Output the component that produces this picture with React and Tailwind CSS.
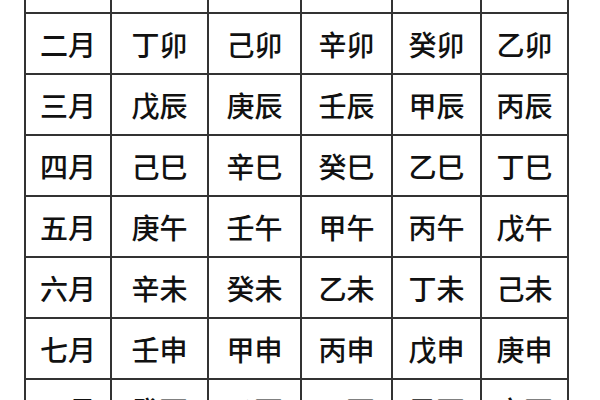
const rows = [
  ["正月", "丙寅", "戊寅", "庚寅", "壬寅", "甲寅"],
  ["二月", "丁卯", "己卯", "辛卯", "癸卯", "乙卯"],
  ["三月", "戊辰", "庚辰", "壬辰", "甲辰", "丙辰"],
  ["四月", "己巳", "辛巳", "癸巳", "乙巳", "丁巳"],
  ["五月", "庚午", "壬午", "甲午", "丙午", "戊午"],
  ["六月", "辛未", "癸未", "乙未", "丁未", "己未"],
  ["七月", "壬申", "甲申", "丙申", "戊申", "庚申"],
  ["八月", "癸酉", "乙酉", "丁酉", "己酉", "辛酉"],
];

const App = () => {
  return (
    <div className="w-[600px] h-[400px] overflow-hidden bg-white">
      <div
        className="ml-[24px] mt-[-49px] w-[545px] grid grid-cols-[86px_97px_93px_91px_89px_87px] border-l-2 border-t-2 border-[#333] text-[28px] font-medium text-[#111] leading-none"
        style={{ fontFamily: '"Noto Sans CJK SC", "Noto Sans", sans-serif' }}
      >
        {rows.map((row) =>
          row.map((cell, j) => (
            <div
              key={row[0] + j}
              className="h-[61px] flex items-center justify-center border-r-2 border-b-2 border-[#333]"
            >
              {cell}
            </div>
          ))
        )}
      </div>
    </div>
  );
};

export default App;
